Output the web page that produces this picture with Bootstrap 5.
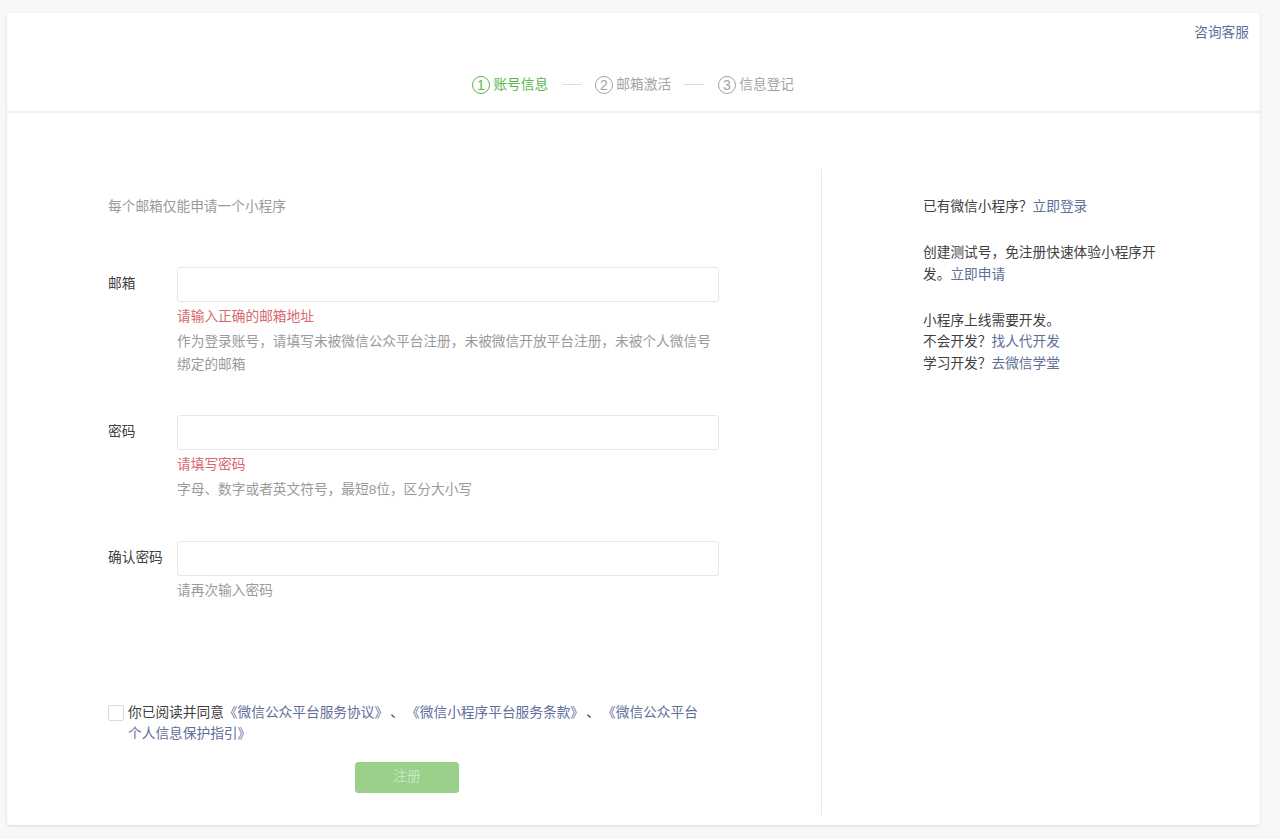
<!DOCTYPE html>
<html lang="zh-CN">
<head>
    <meta charset="UTF-8">
    <meta name="viewport" content="width=device-width, initial-scale=1">
    <title>注册</title>
    <link href="https://cdn.jsdelivr.net/npm/bootstrap@5.3.0/dist/css/bootstrap.min.css" rel="stylesheet">
    <style>
        body {
          background: #f7f8fa;
          font-family: "Liberation Sans", "Noto Sans CJK SC", sans-serif;
          font-size: 13.7px;
          line-height: 22px;
          color: #404040;
          padding: 13px 20px 14px 7px;
          height: 839px;
          overflow: hidden;
        }
        a { color: #5f6f99; text-decoration: none; }
        .reg-panel {
          background: #fff;
          height: 812px;
          border-radius: 4px;
          box-shadow: 0 1px 3px rgba(0, 0, 0, .13);
        }
        .reg-head {
          height: 100px;
          border-bottom: 2px solid #f0f0f0;
          padding: 9px 11px 0 0;
        }
        .step-bar { margin: 30px -10px 0 0; color: #a3a3a3; gap: 13.4px; }
        .step-item { gap: 3.4px; }
        .step-on { color: #56b947; }
        .step-num {
          width: 18px;
          height: 18px;
          border: 1px solid currentColor;
          border-radius: 50%;
          font-size: 14px;
          line-height: 16px;
          text-align: center;
        }
        .step-line { width: 20px; height: 1px; background: #dcdcdc; margin-top: -1px; }
        .reg-body { padding-top: 56px; }
        .reg-left { width: 815px; height: 646px; padding: 27px 0 0 101px; border-right: 1px solid #e7e7eb; }
        .reg-right { padding: 27px 0 0 101px; width: 335px; line-height: 21.5px; }
        .reg-right p { margin-bottom: 24.5px; }
        .tip-top { color: #9a9a9a; margin-bottom: 49px; }
        .field-row { width: 611px; }
        .field-label { width: 69px; flex-shrink: 0; padding-top: 6px; }
        .field-main { flex-grow: 1; min-width: 0; }
        .field-input {
          height: 35px;
          padding: 0 10px;
          border: 1px solid #e7e7eb;
          border-radius: 3px;
          font-size: 13.7px;
        }
        .err-msg { color: #d9686b; margin-top: 4px; }
        .hint-msg { color: #9a9a9a; line-height: 23px; margin-top: 2px; }
        .hint-only { margin-top: 3px; }
        .gap-a { margin-bottom: 39px; }
        .gap-b { margin-bottom: 40px; }
        .agree-row { width: 592px; margin-top: 100px; line-height: 21px; }
        .agree-box {
          width: 16px;
          height: 16px;
          flex-shrink: 0;
          margin-top: 3px;
          margin-right: 4px;
          border: 1px solid #d9dadc;
          border-radius: 2px;
          background: #fff;
        }
        .agree-sep { margin: 0 9px; }
        .btn.reg-btn,
        .btn.reg-btn:disabled {
          width: 104px;
          height: 31px;
          margin-top: 18px;
          margin-left: 247px;
          padding: 0;
          font-size: 13.7px;
          background: #9ad08a;
          border: 1px solid #9ad08a;
          border-radius: 3px;
          color: #c9e6c1;
          opacity: 1;
        }
    </style>
</head>
<body>
<div class="reg-panel">
    <div class="reg-head">
        <div class="text-end"><a href="#">咨询客服</a></div>
        <div class="step-bar d-flex justify-content-center align-items-center">
            <div class="step-item d-flex align-items-center step-on"><span class="step-num">1</span><span>账号信息</span></div>
            <div class="step-line"></div>
            <div class="step-item d-flex align-items-center"><span class="step-num">2</span><span>邮箱激活</span></div>
            <div class="step-line"></div>
            <div class="step-item d-flex align-items-center"><span class="step-num">3</span><span>信息登记</span></div>
        </div>
    </div>
    <div class="reg-body d-flex">
        <div class="reg-left">
            <div class="tip-top">每个邮箱仅能申请一个小程序</div>
            <div class="field-row d-flex gap-a">
                <label class="field-label">邮箱</label>
                <div class="field-main">
                    <input type="text" class="form-control field-input">
                    <div class="err-msg">请输入正确的邮箱地址</div>
                    <div class="hint-msg">作为登录账号，请填写未被微信公众平台注册，未被微信开放平台注册，未被个人微信号绑定的邮箱</div>
                </div>
            </div>
            <div class="field-row d-flex gap-b">
                <label class="field-label">密码</label>
                <div class="field-main">
                    <input type="password" class="form-control field-input">
                    <div class="err-msg">请填写密码</div>
                    <div class="hint-msg">字母、数字或者英文符号，最短8位，区分大小写</div>
                </div>
            </div>
            <div class="field-row d-flex">
                <label class="field-label">确认密码</label>
                <div class="field-main">
                    <input type="password" class="form-control field-input">
                    <div class="hint-msg hint-only">请再次输入密码</div>
                </div>
            </div>
            <div class="agree-row d-flex">
                <span class="agree-box"></span>
                <div>你已阅读并同意<a href="#">《微信公众平台服务协议》</a><span class="agree-sep">、</span><a href="#">《微信小程序平台服务条款》</a><span class="agree-sep">、</span><a href="#">《微信公众平台</a><br><a href="#">个人信息保护指引》</a></div>
            </div>
            <button type="button" class="btn reg-btn d-block" disabled>注册</button>
        </div>
        <div class="reg-right">
            <p>已有微信小程序？<a href="#">立即登录</a></p>
            <p>创建测试号，免注册快速体验小程序开<br>发。<a href="#">立即申请</a></p>
            <p>小程序上线需要开发。<br>不会开发？<a href="#">找人代开发</a><br>学习开发？<a href="#">去微信学堂</a></p>
        </div>
    </div>
</div>
<script src="https://cdn.jsdelivr.net/npm/bootstrap@5.3.0/dist/js/bootstrap.bundle.min.js"></script>
</body>
</html>
